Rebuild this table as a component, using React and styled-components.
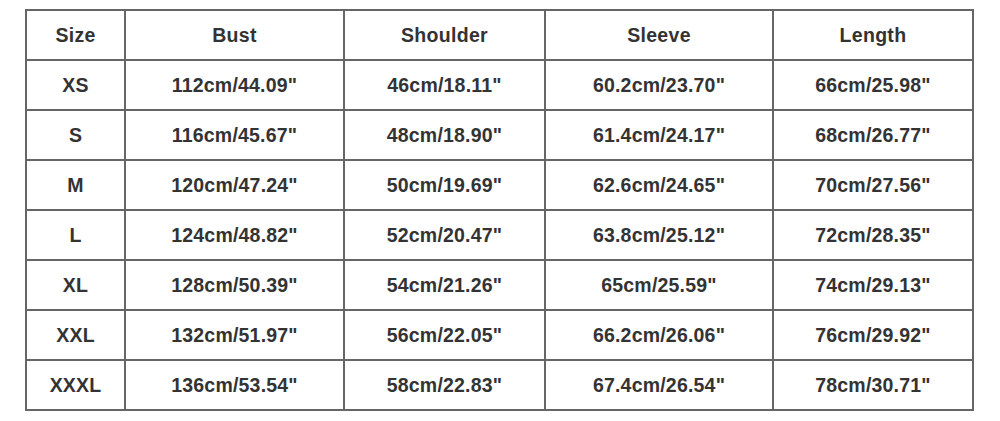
import React from "react";
import styled, { createGlobalStyle } from "styled-components";

const GlobalStyle = createGlobalStyle`
  html, body {
    margin: 0;
    padding: 0;
    background: #ffffff;
  }
`;

const Page = styled.div`
  width: 1000px;
  height: 421px;
  padding: 9px 0 0 25px;
  box-sizing: border-box;
  background: #ffffff;
`;

const Chart = styled.div`
  display: grid;
  grid-template-columns: 97px 217px 199px 226px 198px;
  grid-auto-rows: 48px;
  gap: 2px;
  padding: 2px;
  width: max-content;
  background: #666666;
`;

const Cell = styled.div`
  display: flex;
  align-items: center;
  justify-content: center;
  background: #ffffff;
  font-family: "Liberation Sans", Arial, sans-serif;
  font-weight: 700;
  font-size: 19.5px;
  color: #333333;
  letter-spacing: ${({ $head }) => ($head ? "0.3px" : "0.2px")};
`;

const headers = ["Size", "Bust", "Shoulder", "Sleeve", "Length"];

const rows = [
  ["XS", '112cm/44.09"', '46cm/18.11"', '60.2cm/23.70"', '66cm/25.98"'],
  ["S", '116cm/45.67"', '48cm/18.90"', '61.4cm/24.17"', '68cm/26.77"'],
  ["M", '120cm/47.24"', '50cm/19.69"', '62.6cm/24.65"', '70cm/27.56"'],
  ["L", '124cm/48.82"', '52cm/20.47"', '63.8cm/25.12"', '72cm/28.35"'],
  ["XL", '128cm/50.39"', '54cm/21.26"', '65cm/25.59"', '74cm/29.13"'],
  ["XXL", '132cm/51.97"', '56cm/22.05"', '66.2cm/26.06"', '76cm/29.92"'],
  ["XXXL", '136cm/53.54"', '58cm/22.83"', '67.4cm/26.54"', '78cm/30.71"'],
];

const App = () => (
  <>
    <GlobalStyle />
    <Page>
      <Chart>
        {headers.map((h) => (
          <Cell key={h} $head>
            {h}
          </Cell>
        ))}
        {rows.map((row) =>
          row.map((value, i) => <Cell key={row[0] + i}>{value}</Cell>)
        )}
      </Chart>
    </Page>
  </>
);

export default App;
